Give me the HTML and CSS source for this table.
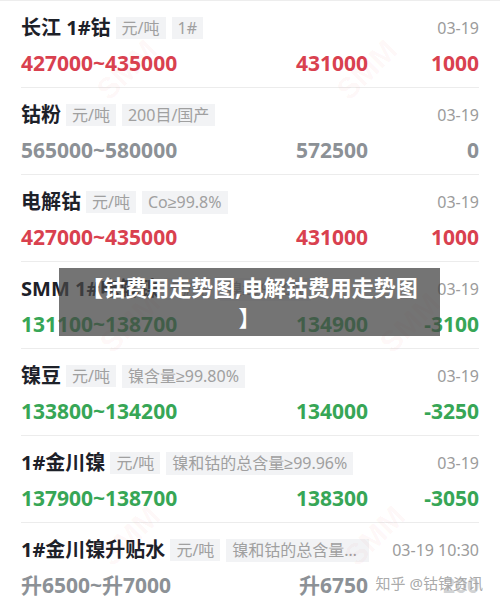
FILE: index.html
```html
<!DOCTYPE html>
<html lang="zh-CN">
<head>
    <meta charset="UTF-8">
    <meta name="viewport" content="width=device-width, initial-scale=1.0">
    <title>钴镍价格</title>
    <link rel="stylesheet" href="styles.css">
</head>
<body>
    <div class="page">
        <ul class="price-list">
            <li class="item up">
                <div class="head">
                    <span class="name">长江 1#钴</span>
                    <span class="tag">元/吨</span>
                    <span class="tag">1#</span>
                    <span class="date">03-19</span>
                </div>
                <div class="vals">
                    <span class="range">427000~435000</span>
                    <span class="avg">431000</span>
                    <span class="chg">1000</span>
                </div>
            </li>
            <li class="item flat">
                <div class="head">
                    <span class="name">钴粉</span>
                    <span class="tag">元/吨</span>
                    <span class="tag">200目/国产</span>
                    <span class="date">03-19</span>
                </div>
                <div class="vals">
                    <span class="range">565000~580000</span>
                    <span class="avg">572500</span>
                    <span class="chg">0</span>
                </div>
            </li>
            <li class="item up">
                <div class="head">
                    <span class="name">电解钴</span>
                    <span class="tag">元/吨</span>
                    <span class="tag">Co<span class="ge">≥</span>99.8%</span>
                    <span class="date">03-19</span>
                </div>
                <div class="vals">
                    <span class="range">427000~435000</span>
                    <span class="avg">431000</span>
                    <span class="chg">1000</span>
                </div>
            </li>
            <li class="item down">
                <div class="head">
                    <span class="name">SMM 1#电解镍</span>
                    <span class="tag">元/吨</span>
                    <span class="tag">镍<span class="ge">≥</span>99.90%</span>
                    <span class="date">03-19</span>
                </div>
                <div class="vals">
                    <span class="range">131100~138700</span>
                    <span class="avg">134900</span>
                    <span class="chg">-3100</span>
                </div>
            </li>
            <li class="item down">
                <div class="head">
                    <span class="name">镍豆</span>
                    <span class="tag">元/吨</span>
                    <span class="tag">镍含量<span class="ge">≥</span>99.80%</span>
                    <span class="date">03-19</span>
                </div>
                <div class="vals">
                    <span class="range">133800~134200</span>
                    <span class="avg">134000</span>
                    <span class="chg">-3250</span>
                </div>
            </li>
            <li class="item down">
                <div class="head">
                    <span class="name">1#金川镍</span>
                    <span class="tag">元/吨</span>
                    <span class="tag">镍和钴的总含量<span class="ge">≥</span>99.96%</span>
                    <span class="date">03-19</span>
                </div>
                <div class="vals">
                    <span class="range">137900~138700</span>
                    <span class="avg">138300</span>
                    <span class="chg">-3050</span>
                </div>
            </li>
            <li class="item flat last">
                <div class="head">
                    <span class="name">1#金川镍升贴水</span>
                    <span class="tag">元/吨</span>
                    <span class="tag cut">镍和钴的总含量<span class="ge">≥</span>99.96%</span>
                    <span class="date wide">03-19 10:30</span>
                </div>
                <div class="vals">
                    <span class="range">升6500~升7000</span>
                    <span class="avg">升6750</span>
                    <span class="chg">200</span>
                </div>
            </li>
        </ul>

        <!-- faint SMM watermarks -->
        <span class="smm" style="left: 92px; top: 52px;">SMM</span>
        <span class="smm" style="left: 332px; top: 52px;">SMM</span>
        <span class="smm" style="left: 95px; top: 305px;">SMM</span>
        <span class="smm" style="left: 375px; top: 305px;">SMM</span>
        <span class="smm" style="left: 95px; top: 518px;">SMM</span>
        <span class="smm" style="left: 340px; top: 518px;">SMM</span>

        <div class="caption">【钴费用走势图,电解钴费用走势图<br>】</div>
        <div class="credit">知乎 @钴镍资讯</div>
    </div>
</body>
</html>
```

FILE: styles.css
```css
body {
    margin: 0;
    background-color: #ffffff;
    font-family: 'Noto Sans', 'Noto Sans CJK SC', sans-serif;
    color: #1d2129;
}
.page {
    position: relative;
    width: 500px;
    height: 604px;
    overflow: hidden;
    border-top: 1px solid #ededed;
    box-sizing: border-box;
}
.price-list {
    list-style: none;
    margin: 0 21px;
    padding: 0;
}
.item {
    padding: 16px 0 11px;
    border-bottom: 1px solid #ececec;
}
.item.last {
    border-bottom: none;
}
.head {
    display: flex;
    align-items: center;
    height: 22px;
}
.name {
    font-size: 20px;
    font-weight: 700;
    line-height: 22px;
    margin-right: 5px;
    white-space: nowrap;
    flex-shrink: 0;
}
.tag {
    background-color: #f2f3f5;
    color: #a0a0a0;
    font-size: 16px;
    line-height: 22px;
    padding: 0 6px;
    margin-right: 6px;
    white-space: nowrap;
    flex-shrink: 0;
}
.tag.cut {
    flex-shrink: 1;
    min-width: 0;
    overflow: hidden;
    text-overflow: ellipsis;
}
.ge {
    font-family: 'Liberation Sans', sans-serif;
}
.date {
    margin-left: auto;
    padding-left: 10px;
    font-size: 16px;
    color: #9b9b9b;
    white-space: nowrap;
    flex-shrink: 0;
}
.date.wide {
    padding-left: 17px;
}
.vals {
    display: grid;
    grid-template-columns: 1fr 120px 111px;
    margin-top: 11px;
    font-size: 21px;
    font-weight: 700;
    line-height: 26px;
}
.avg, .chg {
    text-align: right;
}
.up .vals {
    color: #d9414f;
}
.flat .vals {
    color: #8c9196;
}
.down .vals {
    color: #37a656;
}
.smm {
    position: absolute;
    font-family: 'Liberation Sans', sans-serif;
    font-size: 30px;
    font-weight: 700;
    color: rgba(230, 60, 60, 0.045);
    transform: rotate(-45deg);
}
.caption {
    position: absolute;
    left: 59px;
    top: 267px;
    width: 381px;
    height: 68px;
    box-sizing: border-box;
    padding: 4px 10px;
    background-color: rgba(70, 70, 70, 0.75);
    color: #ffffff;
    font-size: 22px;
    font-weight: 700;
    line-height: 30px;
    text-align: center;
}
.credit {
    position: absolute;
    right: 14px;
    top: 571px;
    font-size: 15px;
    color: rgba(160, 160, 160, 0.9);
    background: rgba(255, 255, 255, 0.6);
    padding: 0 3px;
}
```
